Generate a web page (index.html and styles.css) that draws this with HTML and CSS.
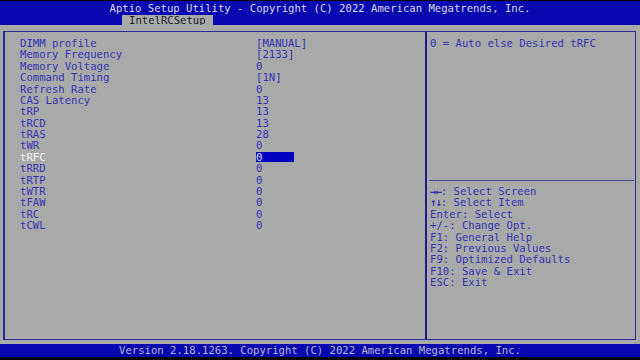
FILE: index.html
```html
<!DOCTYPE html>
<html lang="en">
<head>
    <meta charset="UTF-8">
    <meta name="viewport" content="width=device-width, initial-scale=1.0">
    <title>Aptio Setup Utility</title>
    <link rel="stylesheet" href="styles.css">
</head>
<body>
    <div class="screen">
        <header class="top-bar">
            <div class="title">Aptio Setup Utility - Copyright (C) 2022 American Megatrends, Inc.</div>
            <div class="tabs">
                <span class="tab active">IntelRCSetup</span>
            </div>
        </header>

        <main class="workspace">
            <div class="frame">
                <!-- Settings list -->
                <section class="settings">
                    <div class="row"><span class="label">DIMM profile</span><span class="value">[MANUAL]</span></div>
                    <div class="row"><span class="label">Memory Frequency</span><span class="value">[2133]</span></div>
                    <div class="row"><span class="label">Memory Voltage</span><span class="value">0</span></div>
                    <div class="row"><span class="label">Command Timing</span><span class="value">[1N]</span></div>
                    <div class="row"><span class="label">Refresh Rate</span><span class="value">0</span></div>
                    <div class="row"><span class="label">CAS Latency</span><span class="value">13</span></div>
                    <div class="row"><span class="label">tRP</span><span class="value">13</span></div>
                    <div class="row"><span class="label">tRCD</span><span class="value">13</span></div>
                    <div class="row"><span class="label">tRAS</span><span class="value">28</span></div>
                    <div class="row"><span class="label">tWR</span><span class="value">0</span></div>
                    <div class="row selected"><span class="label">tRFC</span><span class="value"><span class="edit">0</span></span></div>
                    <div class="row"><span class="label">tRRD</span><span class="value">0</span></div>
                    <div class="row"><span class="label">tRTP</span><span class="value">0</span></div>
                    <div class="row"><span class="label">tWTR</span><span class="value">0</span></div>
                    <div class="row"><span class="label">tFAW</span><span class="value">0</span></div>
                    <div class="row"><span class="label">tRC</span><span class="value">0</span></div>
                    <div class="row"><span class="label">tCWL</span><span class="value">0</span></div>
                </section>

                <!-- Help panel -->
                <aside class="help">
                    <div class="help-text">0 = Auto else Desired tRFC</div>
                    <div class="divider"></div>
                    <ul class="keys">
                        <li><span class="arrows">&#8594;&#8592;</span>: Select Screen</li>
                        <li><span class="arrows">&#8593;&#8595;</span>: Select Item</li>
                        <li>Enter: Select</li>
                        <li>+/-: Change Opt.</li>
                        <li>F1: General Help</li>
                        <li>F2: Previous Values</li>
                        <li>F9: Optimized Defaults</li>
                        <li>F10: Save &amp; Exit</li>
                        <li>ESC: Exit</li>
                    </ul>
                </aside>
            </div>
        </main>

        <footer class="bottom-bar">Version 2.18.1263. Copyright (C) 2022 American Megatrends, Inc.</footer>
    </div>
</body>
</html>
```

FILE: styles.css
```css
body {
    margin: 0;
    padding: 0;
    background-color: #000;
    font-family: "DejaVu Sans Mono", "Liberation Mono", monospace;
    font-size: 10.6px;
}

.screen {
    width: 640px;
    height: 360px;
    display: flex;
    flex-direction: column;
    padding-top: 1px;
    box-sizing: border-box;
}

.top-bar {
    height: 24px;
    background-color: #0808b0;
    display: flex;
    flex-direction: column;
}

.title {
    color: #d8d8e0;
    text-align: center;
    line-height: 11px;
    padding-top: 2px;
}

.tabs {
    display: flex;
    margin-top: 1px;
    padding-left: 122px;
}

.tab {
    height: 10px;
    line-height: 11px;
    padding: 0 7px;
    color: #1a1a2a;
}

.tab.active {
    background-color: #a9a9a9;
}

.workspace {
    height: 319px;
    background-color: #a9a9a9;
    padding: 6px 4px 4px 3px;
    box-sizing: border-box;
}

.frame {
    height: 100%;
    display: flex;
    border: 1px solid #2a2a90;
    border-left-width: 2px;
    box-sizing: border-box;
}

.settings {
    width: 422px;
    padding: 6px 0 0 15px;
    box-sizing: border-box;
    border-right: 2px solid #1c1c8c;
}

.row {
    display: grid;
    grid-template-columns: 236px auto;
    line-height: 11.375px;
    height: 11.375px;
    color: #3434b4;
}

.row.selected .label {
    color: #f4f4f4;
}

.edit {
    display: inline-block;
    width: 38px;
    height: 10px;
    line-height: 10px;
    background-color: #0000c0;
    color: #e0e0f0;
}

.help {
    flex: 1;
    display: flex;
    flex-direction: column;
    color: #3434b4;
}

.help-text {
    height: 148px;
    padding: 6px 0 0 3px;
    box-sizing: border-box;
    line-height: 11.375px;
}

.divider {
    height: 1px;
    margin: 0 1px 0 2px;
    background-color: #4a4a9a;
}

.keys {
    list-style: none;
    margin: 0;
    padding: 5px 0 0 3px;
}

.keys li {
    line-height: 11.375px;
    height: 11.375px;
}

.arrows {
    font-weight: bold;
    letter-spacing: -1px;
}

.bottom-bar {
    height: 13px;
    background-color: #0808b0;
    color: #b8b8c8;
    text-align: center;
    line-height: 13px;
}
```
